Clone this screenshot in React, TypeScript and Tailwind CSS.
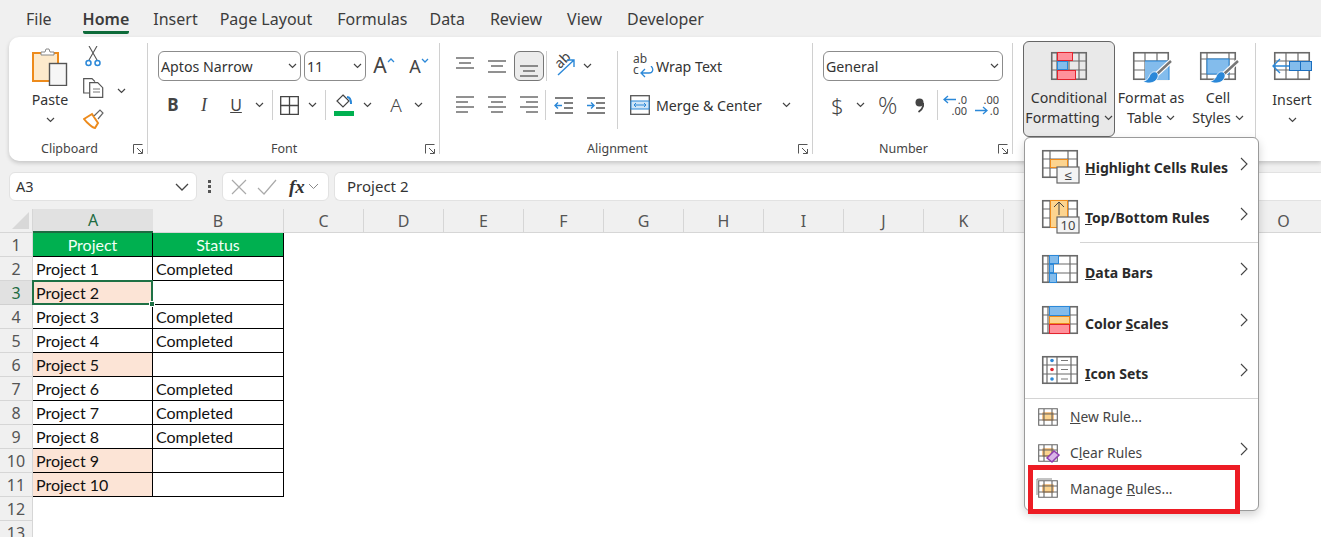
import type { ReactNode } from "react";

const GRAY = "#6a6a6a";
const BLUE = "#2b88d8";
const ORANGE = "#ed8b1c";

const Chev = ({ className = "" }: { className?: string }) => (
  <svg width="9" height="6" viewBox="0 0 9 6" className={`shrink-0 ${className}`}>
    <path d="M1 1l3.5 3.5L8 1" fill="none" stroke="#444" strokeWidth="1.2" />
  </svg>
);

const MenuChev = () => (
  <svg width="8" height="14" viewBox="0 0 8 14" className="shrink-0 mb-[8px]">
    <path d="M1 1l6 6-6 6" fill="none" stroke="#444" strokeWidth="1.1" />
  </svg>
);

const Launcher = () => (
  <svg width="10" height="10" viewBox="0 0 10 10" className="shrink-0">
    <path d="M.5 9.5V.5h9M4 4l5 5M9.5 5v4.5H5" fill="none" stroke="#555" strokeWidth="1" />
  </svg>
);

const VSep = ({ className = "h-[30px]" }: { className?: string }) => (
  <div className={`w-px bg-[#d0d0d0] shrink-0 ${className}`} />
);

const GroupSep = () => <VSep className="h-[111px] mt-[2px]" />;

// table shaped base used by most of the style icons
const Grid = ({ w = 36, h = 28, cols, rows, children, over }: { w?: number; h?: number; cols: number[]; rows: number[]; children?: ReactNode; over?: ReactNode }) => (
  <svg width={w + 10} height={h + 8} viewBox={`-5 -4 ${w + 10} ${h + 8}`} className="shrink-0 overflow-visible">
    {children}
    <rect x="0.75" y="0.75" width={w - 1.5} height={h - 1.5} fill="none" stroke={GRAY} strokeWidth="1.6" />
    {cols.map((x) => <path key={x} d={`M${x} 0V${h}`} stroke={GRAY} strokeWidth="1.2" />)}
    {rows.map((y) => <path key={y} d={`M0 ${y}H${w}`} stroke={GRAY} strokeWidth="1.2" />)}
    {over}
  </svg>
);

const Brush = () => (
  <g>
    <path d="M38 9L24 22" stroke="#fff" strokeWidth="5" />
    <path d="M38 9L24 22" stroke="#777" strokeWidth="2.4" />
    <path d="M23 20c-4-1-6 2-7 5-1 2-3 4-6 4 3 3 11 3 14-2 2-3 1-6-1-7z" fill={BLUE} stroke="#fff" strokeWidth=".8" />
  </g>
);

const Box = ({ x, y, w, h, fill, stroke }: { x: number; y: number; w: number; h: number; fill: string; stroke: string }) => (
  <rect x={x + 0.5} y={y + 0.5} width={w - 1} height={h - 1} fill={fill} stroke={stroke} strokeWidth="1" />
);

const Lines = ({ items, w = 18, h = 22, color = "#555" }: { items: [number, number, number][]; w?: number; h?: number; color?: string }) => (
  <svg width={w} height={h} viewBox={`0 0 ${w} ${h}`}>
    {items.map(([a, b, y]) => <path key={`${a}${y}`} d={`M${a} ${y}H${b}`} stroke={color} strokeWidth="1.3" />)}
  </svg>
);

const IconBtn = ({ w = 32, children, className = "" }: { w?: number; children: ReactNode; className?: string }) => (
  <div style={{ width: w }} className={`h-[30px] flex items-center justify-center shrink-0 ${className}`}>{children}</div>
);

const Select = ({ label, className }: { label: string; className: string }) => (
  <div className={`h-[30px] rounded-[6px] border border-[#8c8c8c] flex items-center justify-between pl-[2px] pr-[3px] text-[14.2px] text-[#333] shrink-0 ${className}`}>
    <span className="pt-[1px]">{label}</span>
    <Chev />
  </div>
);

const Group = ({ label, width, labelShift = 0, children }: { label: string; width: number; labelShift?: number; children: ReactNode }) => (
  <div style={{ width }} className="shrink-0 flex flex-col h-full">
    <div className="flex-1 min-h-0">{children}</div>
    <div className="h-[24px] flex items-center justify-between pr-[4px] shrink-0">
      <span style={{ marginLeft: labelShift }} className="text-[12.5px] text-[#444]">{label}</span>
      <Launcher />
    </div>
  </div>
);

const ArrowLines = ({ dir }: { dir: "in" | "out" }) => (
  <svg width="20" height="20" viewBox="0 0 20 20">
    <path d="M1 3H19M1 18H19" stroke="#555" strokeWidth="1.3" />
    <path d="M10 8H19M10 13H19" stroke="#555" strokeWidth="1.3" />
    {dir === "out"
      ? <path d="M8 10.5H1M4 7.5l-3 3 3 3" fill="none" stroke={BLUE} strokeWidth="1.4" />
      : <path d="M1 10.5H8M5 7.5l3 3-3 3" fill="none" stroke={BLUE} strokeWidth="1.4" />}
  </svg>
);

const Caret = ({ down }: { down?: boolean }) => (
  <svg width="8" height="5" viewBox="0 0 8 5" className="shrink-0 -mt-[12px]">
    <path d={down ? "M1 1l3 3 3-3" : "M1 4l3-3 3 3"} fill="none" stroke={BLUE} strokeWidth="1.3" />
  </svg>
);

const ClipboardGroup = () => (
  <Group label="Clipboard" width={138} labelShift={32}>
    <div className="flex pt-[7px] pl-[25px]">
      <div className="w-[32px] flex flex-col items-center">
        <svg width="36" height="38" viewBox="0 0 36 38" className="shrink-0">
          <rect x="1" y="5" width="25" height="28" fill="#fdeacc" stroke={ORANGE} strokeWidth="2" />
          <path d="M9 7V4h4l1-3h3l1 3h4v3z" fill="#fff" stroke="#888" strokeWidth="1" />
          <rect x="17.5" y="15.5" width="17" height="22" fill="#f6f6f6" stroke="#555" strokeWidth="1.4" />
        </svg>
        <span className="text-[14.2px] text-[#333] mt-[4px] leading-[20px]">Paste</span>
        <Chev className="mt-[7px]" />
      </div>
      <div className="w-[26px] ml-[14px] -mt-[2px] flex flex-col items-center gap-[11px]">
        <svg width="16" height="21" viewBox="0 0 16 21">
          <path d="M4 0l8 14M12 0L4 14" stroke="#555" strokeWidth="1.1" />
          <circle cx="3.5" cy="17" r="2.5" fill="none" stroke={BLUE} strokeWidth="1.5" />
          <circle cx="12.5" cy="17" r="2.5" fill="none" stroke={BLUE} strokeWidth="1.5" />
        </svg>
        <svg width="21" height="20" viewBox="0 0 21 20">
          <path d="M7 15H.7V.7H9l3 3" fill="none" stroke="#555" strokeWidth="1.2" />
          <path d="M6.7 4.7h8l5 5v9.6h-13z" fill="#fff" stroke="#555" strokeWidth="1.2" />
          <path d="M10 11h7M10 14h7" stroke="#777" strokeWidth="1" />
        </svg>
        <svg width="21" height="20" viewBox="0 0 21 20">
          <path d="M1 10l8-5 6 9-3 5c-2 0-8-5-11-9z" fill="#fff" stroke={ORANGE} strokeWidth="2" />
          <path d="M11 7l6-6 3 3-5 6" fill="#fff" stroke="#666" strokeWidth="1.2" />
        </svg>
      </div>
      <Chev className="mt-[40px] ml-[11px]" />
    </div>
  </Group>
);

const FontGroup = () => (
  <Group label="Font" width={291} labelShift={123}>
    <div className="pt-[10px] pl-[10px]">
      <div className="flex items-center">
        <Select label="Aptos Narrow" className="w-[143px]" />
        <Select label="11" className="w-[62px] ml-[3px]" />
        <IconBtn w={26} className="ml-[5px] text-[21px] text-[#444]">A<Caret /></IconBtn>
        <IconBtn w={26} className="ml-[9px] text-[18px] text-[#444]">A<Caret down /></IconBtn>
      </div>
      <div className="flex items-center mt-[9px] text-[#444]">
        <IconBtn w={30} className="font-bold text-[17px]">B</IconBtn>
        <IconBtn w={32} className="italic text-[18px] font-['Liberation_Serif',serif]">I</IconBtn>
        <IconBtn w={32} className="text-[16px] underline">U</IconBtn>
        <Chev className="ml-[3px] mr-[8px]" />
        <VSep />
        <svg width="19" height="19" viewBox="0 0 19 19" className="ml-[7px] mr-[9px]">
          <path d="M.7.7h17.600v17.600H.7zM9.500 0v19M0 9.500h19" fill="none" stroke="#444" strokeWidth="1.300" />
        </svg>
        <Chev />
        <VSep className="h-[30px] ml-[8px]" />
        <svg width="20" height="22" viewBox="0 0 20 22" className="ml-[8px] mr-[9px]">
          <path d="M9 1l6 6-6 6-6-6z" fill="none" stroke="#444" strokeWidth="1.200" />
          <path d="M13 3c3 0 4 3 4 7" fill="none" stroke={BLUE} strokeWidth="2" />
          <rect x="0" y="17" width="20" height="5" fill="#00b050" />
        </svg>
        <Chev />
        <IconBtn w={30} className="ml-[9px] text-[19px] font-light">A</IconBtn>
        <Chev className="ml-[3px]" />
      </div>
    </div>
  </Group>
);

const AlignmentGroup = () => (
  <Group label="Alignment" width={372} labelShift={147}>
    <div className="flex pt-[10px] pl-[9px]">
      <div>
        <div className="flex items-center">
          <IconBtn><Lines items={[[0, 18, 3], [3, 15, 8], [0, 18, 13]]} /></IconBtn>
          <IconBtn><Lines items={[[0, 18, 6], [3, 15, 11], [0, 18, 17]]} /></IconBtn>
          <IconBtn w={30} className="bg-[#ececec] border border-[#777] rounded-[6px] ml-px"><Lines items={[[0, 18, 11], [3, 15, 16], [0, 18, 21]]} /></IconBtn>
          <div className="ml-[2px]"><VSep /></div>
          <div className="relative w-[24px] h-[26px] ml-[6px] shrink-0">
            <span className="absolute left-[1px] top-[-1px] -rotate-45 text-[14px] text-[#444] leading-[16px]">ab</span>
            <svg width="24" height="26" viewBox="0 0 24 26" className="absolute inset-0">
              <path d="M5 22L21 7M14 7h7v7" fill="none" stroke={BLUE} strokeWidth="1.4" />
            </svg>
          </div>
          <Chev className="ml-[6px]" />
        </div>
        <div className="flex items-center mt-[9px]">
          <IconBtn><Lines items={[[0, 18, 3], [0, 12, 8], [0, 18, 13], [0, 12, 18]]} /></IconBtn>
          <IconBtn><Lines items={[[0, 18, 3], [3, 15, 8], [0, 18, 13], [3, 15, 18]]} /></IconBtn>
          <IconBtn><Lines items={[[0, 18, 3], [6, 18, 8], [0, 18, 13], [6, 18, 18]]} /></IconBtn>
          <VSep />
          <IconBtn w={35}><ArrowLines dir="out" /></IconBtn>
          <IconBtn w={29}><ArrowLines dir="in" /></IconBtn>
        </div>
      </div>
      <div className="ml-[7px]"><VSep className="h-[78px]" /></div>
      <div className="ml-[12px]">
        <div className="h-[30px] flex items-center pl-[3px]">
          <div className="relative w-[20px] h-[26px] text-[#444] text-[12px] leading-[11px] shrink-0">
            <div>ab</div>
            <div>c</div>
            <svg width="14" height="12" viewBox="0 0 14 12" className="absolute left-[7px] top-[13px]">
              <path d="M11 0c3 3 2 7-2 7H2M5 3L1 7l4 4" fill="none" stroke={BLUE} strokeWidth="1.3" />
            </svg>
          </div>
          <span className="ml-[3px] pt-[1px] text-[14.2px] text-[#333]">Wrap Text</span>
        </div>
        <div className="h-[30px] flex items-center mt-[9px]">
          <svg width="20" height="20" viewBox="0 0 20 20" className="shrink-0">
            <rect x=".7" y=".7" width="18.6" height="18.6" fill="#fff" stroke="#555" strokeWidth="1.3" />
            <rect x="1" y="6" width="18" height="8" fill="#cfe5f7" stroke={BLUE} />
            <path d="M4 10h12M6 8l-2 2 2 2M14 8l2 2-2 2" fill="none" stroke={BLUE} />
          </svg>
          <span className="ml-[6px] pt-[1px] text-[14.2px] text-[#333]">Merge &amp; Center</span>
          <Chev className="ml-[20px]" />
        </div>
      </div>
    </div>
  </Group>
);

const NumberGroup = () => (
  <Group label="Number" width={199} labelShift={66}>
    <div className="pt-[10px] pl-[10px]">
      <Select label="General" className="w-[180px]" />
      <div className="flex items-center mt-[9px] h-[30px] text-[#444]">
        <span className="w-[14px] text-[22px] ml-[8px] font-light">$</span>
        <Chev className="ml-[11px]" />
        <span className="w-[22px] text-[24px] ml-[13px] font-light leading-none font-['Open_Sans',sans-serif]">%</span>
        <svg width="9" height="15" viewBox="0 0 9 15" className="ml-[15px] shrink-0 mr-[1px]">
          <circle cx="4.500" cy="4.500" r="4" fill="#444" />
          <path d="M8.500 5c0 4-2 7-5 9" fill="none" stroke="#444" strokeWidth="1.800" />
        </svg>
        <div className="ml-[12px]"><VSep /></div>
        <div className="relative w-[24px] h-[26px] ml-[5px] text-[11px] leading-[11px] text-right shrink-0">
          <div className="pt-[2px]">.0</div>
          <div>.00</div>
          <svg width="13" height="9" viewBox="0 0 13 9" className="absolute left-0 top-[3px]"><path d="M13 4.500H1M5 1L1 4.500 5 8" fill="none" stroke={BLUE} strokeWidth="1.3" /></svg>
        </div>
        <div className="relative w-[24px] h-[26px] ml-[8px] text-[11px] leading-[11px] text-right shrink-0">
          <div className="pt-[2px]">.00</div>
          <div>.0</div>
          <svg width="13" height="9" viewBox="0 0 13 9" className="absolute left-0 top-[14px]"><path d="M0 4.500H12M8 1l4 3.500L8 8" fill="none" stroke={BLUE} strokeWidth="1.3" /></svg>
        </div>
      </div>
    </div>
  </Group>
);

const TallBtn = ({ icon, top, bottom, className = "", gap = "mt-[4px]" }: { icon: ReactNode; top: string; bottom: string; className?: string; gap?: string }) => (
  <div className={`flex flex-col items-center text-[14.2px] text-[#333] leading-[20px] shrink-0 ${className}`}>
    {icon}
    <span className={`${gap} whitespace-nowrap`}>{top}</span>
    <span className="flex items-center gap-[4px] whitespace-nowrap h-[20px]">{bottom}<Chev /></span>
  </div>
);

const StylesGroup = () => (
  <div className="w-[242px] shrink-0 flex pl-[10px]">
    <TallBtn
      className="w-[92px] h-[96px] rounded-[6px] border border-[#666] bg-[#e9e9e9] pt-[6px]"
      top="Conditional"
      bottom="Formatting"
      icon={
        <Grid cols={[6, 18, 28]} rows={[9, 18]} over={<g><Box x={6} y={0} w={16} h={9} fill="#ff919b" stroke="#e3242e" /><Box x={6} y={9} w={11} h={9} fill="#83bcec" stroke={BLUE} /><Box x={6} y={18} w={19} h={10} fill="#ff919b" stroke="#e3242e" /></g>} />
      }
    />
    <TallBtn
      className="w-[68px] ml-[2px] pt-[7px]"
      top="Format as"
      bottom="Table"
      icon={
        <Grid cols={[12, 24]} rows={[9, 18]} over={<g><rect x="12" y="9" width="24" height="19" fill="#83bcec" /><path d="M12 9H36V28" fill="none" stroke={BLUE} /><Brush /></g>} />
      }
    />
    <TallBtn
      className="w-[62px] ml-[2px] pt-[7px]"
      top="Cell"
      bottom="Styles"
      icon={
        <Grid cols={[7, 29]} rows={[7, 22]} over={<g><rect x="7" y="7" width="22" height="15" fill="#83bcec" stroke={BLUE} /><Brush /></g>} />
      }
    />
  </div>
);

const CellsGroup = () => (
  <TallBtn
    className="ml-[11px] w-[50px] pt-[7px]"
    gap="mt-[6px]"
    top="Insert"
    bottom=""
    icon={
      <Grid w={36} cols={[12, 24]} rows={[9, 18]} over={<g><rect x="15.500" y="9.500" width="22" height="9" fill="#83bcec" stroke="#1b6fc0" /><path d="M26.500 9.500v9" stroke="#1b6fc0" /><path d="M15 14H-1M6 7l-7 7 7 7" fill="none" stroke={BLUE} strokeWidth="1.4" /></g>} />
    }
  />
);

const tabs: [string, string][] = [
  ["File", "ml-[26px]"],
  ["Home", "ml-[31px]"],
  ["Insert", "ml-[24px]"],
  ["Page Layout", "ml-[22px]"],
  ["Formulas", "ml-[25px]"],
  ["Data", "ml-[22px]"],
  ["Review", "ml-[25px]"],
  ["View", "ml-[25px]"],
  ["Developer", "ml-[25px]"],
];

const TabBar = () => (
  <div className="h-[37px] flex items-start text-[16px] text-[#3c3c3c]">
    {tabs.map(([t, cls]) => (
      <div key={t} className={`${cls} h-[34px] pt-[7px] leading-[24px] ${t === "Home" ? "font-semibold border-b-[3px] border-[#0e6b3a] rounded-b-[2px]" : ""}`}>{t}</div>
    ))}
  </div>
);

const Ribbon = () => (
  <div className="ml-[9px] h-[124px] bg-white rounded-l-[10px] shadow-[0_2px_4px_rgba(0,0,0,0.18)] flex pt-[4px]">
    <ClipboardGroup />
    <GroupSep />
    <FontGroup />
    <GroupSep />
    <AlignmentGroup />
    <GroupSep />
    <NumberGroup />
    <GroupSep />
    <StylesGroup />
    <GroupSep />
    <CellsGroup />
  </div>
);

const FormulaBar = () => (
  <div className="mt-[11px] h-[29px] flex items-center pl-[9px]">
    <div className="w-[188px] h-full bg-white rounded-[6px] border border-[#e2e2e2] flex items-center justify-between pl-[6px] pr-[7px] text-[14.5px] text-[#333]">
      <span>A3</span>
      <svg width="14" height="8" viewBox="0 0 14 8"><path d="M1 1l6 6 6-6" fill="none" stroke="#444" strokeWidth="1.3" /></svg>
    </div>
    <div className="w-[25px] flex flex-col items-center gap-[2px]">
      <span className="w-[3px] h-[3px] bg-[#555]" />
      <span className="w-[3px] h-[3px] bg-[#555]" />
      <span className="w-[3px] h-[3px] bg-[#555]" />
    </div>
    <div className="w-[107px] h-full bg-white rounded-[6px] border border-[#e2e2e2] flex items-center pl-[8px] shrink-0">
      <svg width="16" height="16" viewBox="0 0 16 16"><path d="M1 1l14 14M15 1L1 15" stroke="#aaa" strokeWidth="1.2" /></svg>
      <svg width="20" height="16" viewBox="0 0 20 16" className="ml-[10px]"><path d="M1 9l6 6L19 1" fill="none" stroke="#aaa" strokeWidth="1.2" /></svg>
      <span className="ml-[12px] font-['Liberation_Serif',serif] italic font-bold text-[19px] text-[#333] leading-none">fx</span>
      <svg width="11" height="7" viewBox="0 0 11 7" className="ml-[3px]"><path d="M1 1l4.500 4.500L10 1" fill="none" stroke="#888" strokeWidth="1" /></svg>
    </div>
    <div className="ml-[5px] flex-1 h-full bg-white rounded-l-[6px] border border-r-0 border-[#e2e2e2] flex items-center pl-[12px] text-[15px] text-[#333]">Project 2</div>
  </div>
);

const columns = ["C", "D", "E", "F", "G", "H", "I", "J", "K", "L", "M", "N", "O"];

const rows: { n: number; a: string; b: string; flag?: boolean }[] = [
  { n: 2, a: "Project 1", b: "Completed" },
  { n: 3, a: "Project 2", b: "", flag: true },
  { n: 4, a: "Project 3", b: "Completed" },
  { n: 5, a: "Project 4", b: "Completed" },
  { n: 6, a: "Project 5", b: "", flag: true },
  { n: 7, a: "Project 6", b: "Completed" },
  { n: 8, a: "Project 7", b: "Completed" },
  { n: 9, a: "Project 8", b: "Completed" },
  { n: 10, a: "Project 9", b: "", flag: true },
  { n: 11, a: "Project 10", b: "", flag: true },
];

const RowHead = ({ n, active }: { n: number; active?: boolean }) => (
  <div className={`w-[33px] h-[24px] shrink-0 flex items-center justify-center border-b border-r text-[16px] ${active ? "bg-[#e1e1e1] text-[#1e6b41] border-r-[#1e6b41] border-b-[#d0d0d0]" : "bg-[#f0f0f0] text-[#555] border-[#d6d6d6]"}`}>{n}</div>
);

const Sheet = () => (
  <div className="mt-[8px] font-['Lato',sans-serif]">
    <div className="h-[24px] flex font-['Noto_Sans',sans-serif] text-[16px] text-[#555] bg-[#f0f0f0]">
      <div className="w-[33px] shrink-0 border-r border-b border-[#d6d6d6] flex items-end justify-end pr-[3px] pb-[3px]">
        <div className="w-0 h-0 border-l-[17px] border-l-transparent border-b-[17px] border-b-[#d8d8d8]" />
      </div>
      <div className="w-[120px] shrink-0 bg-[#e1e1e1] border-b-2 border-[#1e6b41] text-[#1e6b41] flex items-center justify-center">A</div>
      <div className="w-[131px] shrink-0 border-r border-b border-[#d6d6d6] flex items-center justify-center">B</div>
      {columns.map((c) => (
        <div key={c} className="w-[80px] shrink-0 border-r border-b border-[#d6d6d6] flex items-center justify-center">{c}</div>
      ))}
    </div>
    <div className="bg-white">
      <div className="flex font-['Noto_Sans',sans-serif]">
        <RowHead n={1} />
        <div className="flex font-['Lato',sans-serif] text-[16px] text-[#f2fff6]">
          <div className="w-[120px] h-[24px] bg-[#00b050] border-r border-b border-black flex items-center justify-center">Project</div>
          <div className="w-[131px] h-[24px] bg-[#00b050] border-r border-b border-black flex items-center justify-center">Status</div>
        </div>
      </div>
      {rows.map((r) => (
        <div key={r.n} className="flex font-['Noto_Sans',sans-serif]">
          <RowHead n={r.n} active={r.n === 3} />
          <div className="flex font-['Lato',sans-serif] text-[16px] text-[#111]">
            <div className={`relative w-[120px] h-[24px] border-r border-b border-black flex items-center pl-[3px] ${r.flag ? "bg-[#fce4d6]" : ""}`}>
              {r.a}
              {r.n === 3 && (
                <div className="absolute z-10 -left-px -top-px -right-px -bottom-px border-2 border-[#1e7145]">
                  <div className="absolute -right-[4px] -bottom-[4px] w-[6px] h-[6px] bg-[#1e7145] border border-white" />
                </div>
              )}
            </div>
            <div className="w-[131px] h-[24px] border-r border-b border-black flex items-center pl-[3px]">{r.b}</div>
          </div>
        </div>
      ))}
      {[12, 13].map((n) => (
        <div key={n} className="flex font-['Noto_Sans',sans-serif]"><RowHead n={n} /></div>
      ))}
    </div>
  </div>
);

const BigItem = ({ icon, label, h }: { icon: ReactNode; label: ReactNode; h: number }) => (
  <div style={{ height: h }} className="flex items-center pl-[12px] pr-[10px]">
    <div className="w-[48px] shrink-0 flex justify-start mb-[7px]">{icon}</div>
    <div className="flex-1 font-bold text-[14px] text-[#2a2a2a]">{label}</div>
    <MenuChev />
  </div>
);

const SmallItem = ({ icon, label, arrow }: { icon: ReactNode; label: ReactNode; arrow?: boolean }) => (
  <div className="h-[36px] flex items-center pl-[13px] pr-[10px]">
    <div className="w-[32px] shrink-0 flex">{icon}</div>
    <div className="flex-1 text-[13.8px] text-[#444]">{label}</div>
    {arrow && <MenuChev />}
  </div>
);

const Keycap = ({ text }: { text: string }) => (
  <g>
    <rect x="15" y="17" width="22" height="16" fill="#f4f4f4" stroke="#666" strokeWidth="1.2" />
    <text x="26" y="30" fontSize="13" textAnchor="middle" fill="#444" fontFamily="Noto Sans, sans-serif">{text}</text>
  </g>
);

const SmallGrid = ({ children }: { children?: ReactNode }) => (
  <svg width="20" height="20" viewBox="0 0 20 20" className="shrink-0 overflow-visible">
    <rect x="5" y="6" width="10" height="7" fill="#fcd48f" stroke={ORANGE} />
    <path d="M.7 1.700H19.300V18.300H.7zM6 1.700V18.300M14 1.700V18.300M.7 7H19.300M.7 13H19.300" fill="none" stroke="#666" strokeWidth="1.100" />
    {children}
  </svg>
);

const ConditionalMenu = () => (
  <div className="absolute left-[1024px] top-[137px] w-[235px] h-[374px] bg-white rounded-[6px] border border-[#9a9a9a] shadow-[0_4px_10px_rgba(0,0,0,0.18)] pt-[4px]">
    <BigItem
      h={51}
      label={<><span className="underline">H</span>ighlight Cells Rules</>}
      icon={
        <Grid cols={[8, 26]} rows={[9, 18]} over={<g><Box x={8} y={9} w={18} h={9} fill="#fcd48f" stroke={ORANGE} /><Keycap text="≤" /></g>} />
      }
    />
    <BigItem
      h={49}
      label={<><span className="underline">T</span>op/Bottom Rules</>}
      icon={
        <Grid cols={[8, 26]} rows={[9, 18]} over={<g><Box x={8} y={0} w={18} h={28} fill="#fcd48f" stroke={ORANGE} /><path d="M17 15V2M12 7l5-5 5 5" fill="none" stroke="#444" /><Keycap text="10" /></g>} />
      }
    />
    <div className="h-px bg-[#d4d4d4] ml-[55px]" />
    <div className="h-[4px]" />
    <BigItem
      h={51}
      label={<><span className="underline">D</span>ata Bars</>}
      icon={
        <Grid cols={[6, 28]} rows={[9, 18]} over={<g><Box x={7} y={0} w={10} h={9} fill="#83bcec" stroke={BLUE} /><Box x={7} y={9} w={5} h={9} fill="#83bcec" stroke={BLUE} /><Box x={7} y={18} w={8} h={10} fill="#83bcec" stroke={BLUE} /></g>} />
      }
    />
    <BigItem
      h={51}
      label={<>Color <span className="underline">S</span>cales</>}
      icon={
        <Grid cols={[6, 28]} rows={[9, 18]} over={<g><Box x={7} y={0} w={21} h={10} fill="#83bcec" stroke={BLUE} /><Box x={7} y={10} w={21} h={8} fill="#fcd48f" stroke={ORANGE} /><Box x={7} y={18} w={21} h={10} fill="#ff919b" stroke="#e3242e" /></g>} />
      }
    />
    <BigItem
      h={49}
      label={<><span className="underline">I</span>con Sets</>}
      icon={
        <Grid cols={[5, 15, 29]} rows={[9, 18]} over={<g><circle cx="10" cy="4.500" r="1.800" fill={BLUE} /><circle cx="10" cy="13.500" r="1.800" fill="#e3242e" /><circle cx="10" cy="23" r="1.800" fill={BLUE} /><path d="M19 4.500h7M19 13.500h7M19 23h7" stroke="#777" /></g>} />
      }
    />
    <div className="h-px bg-[#d4d4d4]" />
    <SmallItem icon={<SmallGrid />} label={<><span className="underline">N</span>ew Rule...</>} />
    <SmallItem
      arrow
      icon={
        <SmallGrid>
          <path d="M9 15l7-7 5 4-7 7z" fill="#d9b5e8" stroke="#8e3fb0" strokeWidth="1.500" />
        </SmallGrid>
      }
      label={<>C<span className="underline">l</span>ear Rules</>}
    />
    <SmallItem
      icon={
        <SmallGrid>
          <path d="M-1 16V0H14" fill="none" stroke="#888" strokeWidth="1" />
        </SmallGrid>
      }
      label={<>Manage <span className="underline">R</span>ules...</>}
    />
  </div>
);

export default function App() {
  return (
    <div className="relative w-[1321px] h-[537px] overflow-hidden bg-[#f0f0f0] font-['Noto_Sans',sans-serif]">
      <TabBar />
      <Ribbon />
      <FormulaBar />
      <Sheet />
      <ConditionalMenu />
      {/* red callout drawn on the screenshot */}
      <div className="absolute left-[1028px] top-[465px] w-[212px] h-[49px] border-[5px] border-[#ed1c24]" />
    </div>
  );
}
